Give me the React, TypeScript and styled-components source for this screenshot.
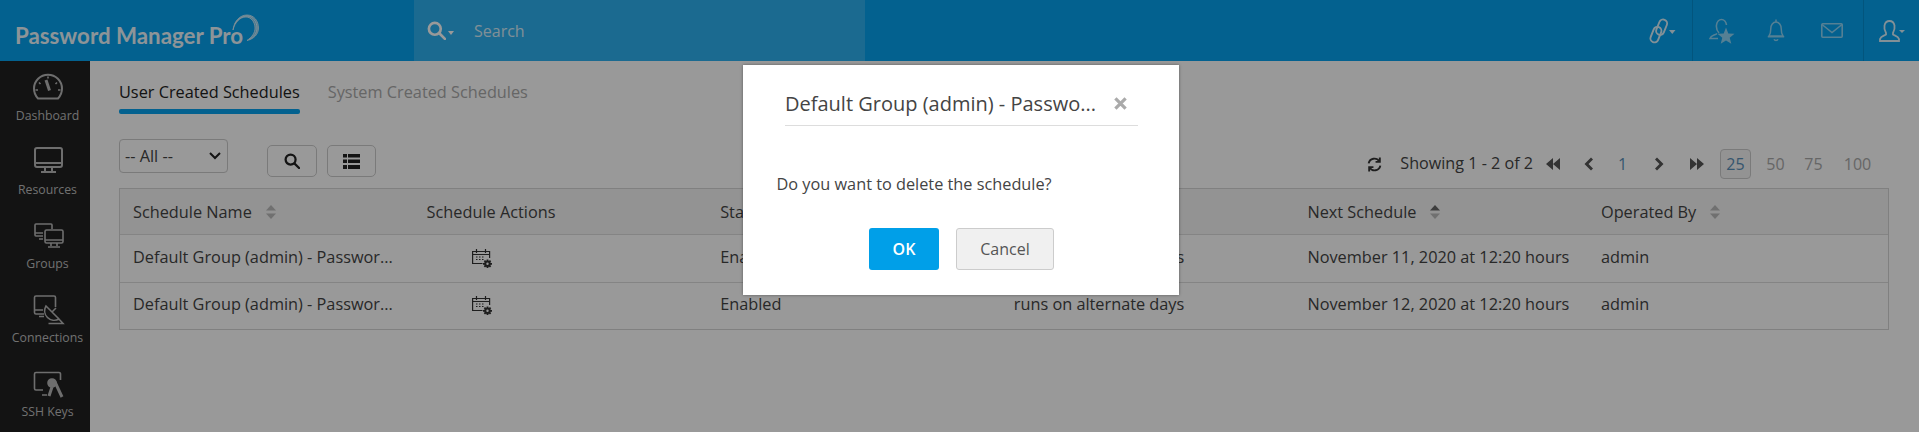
import React from "react";
import styled, { createGlobalStyle } from "styled-components";

const Global = createGlobalStyle`
  html, body { margin: 0; padding: 0; height: 100%; overflow: hidden; background: #fff; }
  body { font-family: "Open Sans", "Liberation Sans", sans-serif; font-size: 16.3px; color: #333; }
  * { box-sizing: border-box; }
`;

const Page = styled.div`position: relative; width: 1919px; height: 432px; overflow: hidden; display: flex; flex-direction: column;`;
const Header = styled.header`height: 61px; flex: none; background: #05a2ee; display: flex; align-items: stretch;`;
const LogoBox = styled.div`width: 414px; flex: none; display: flex; align-items: center; padding: 0 0 0 15px; position: relative;`;
const LogoText = styled.span`color: #fff; opacity: .92; font-family: "Lato", "Open Sans", sans-serif; font-size: 22.3px; font-weight: 700; white-space: nowrap; margin-top: 9px;`;
const LogoArc = styled.svg`position: absolute; left: 231px; top: 14px;`;
const SearchBox = styled.div`width: 451px; flex: none; background: rgba(255,255,255,.16); display: flex; align-items: center; padding-left: 13px; color: #fff;`;
const SearchCaret = styled.span`display: flex; margin: 4px 0 0 2px;`;
const SearchLabel = styled.span`margin-left: 20px; font-size: 16px; color: #fff; opacity: .8;`;
const Spacer = styled.div`flex: 1;`;
const HeadIcon = styled.div<{ $w: number; $line?: boolean; $o?: number }>`width: ${p => p.$w}px; flex: none; display: flex; align-items: center; justify-content: center; color: #fff; border-left: ${p => (p.$line ? "1px solid rgba(0,0,0,.12)" : "none")}; svg { opacity: ${p => p.$o ?? 0.75}; }`;

const Body = styled.div`flex: 1; display: flex; min-height: 0;`;
const Side = styled.nav`width: 90px; flex: none; background: #212121; padding: 12px 0 0 5px; display: flex; flex-direction: column;`;
const SideItem = styled.div`height: 74px; flex: none; display: flex; flex-direction: column; align-items: center; color: #b8b8b8;`;
const SideLabel = styled.span`font-size: 12.3px; line-height: 16px; margin-top: 5px; color: #bdbdbd; white-space: nowrap;`;

const Main = styled.main`flex: 1; background: #fff; padding: 0 30px 0 29px; min-width: 0;`;
const Tabs = styled.div`display: flex; height: 53px; gap: 28px;`;
const Tab = styled.div<{ $on?: boolean }>`height: 53px; padding-top: 20px; line-height: 22px; color: ${p => (p.$on ? "#222" : "#aaa")}; position: relative; white-space: nowrap;`;
const TabBar = styled.i`position: absolute; left: 0; right: 0; bottom: 0; height: 5px; background: #05a2ee; border-radius: 2px;`;

const Toolbar = styled.div`height: 74px; display: flex; align-items: flex-start;`;
const Select = styled.div`margin-top: 25px; width: 109px; height: 34px; border: 1px solid #ccc; border-radius: 4px; display: flex; align-items: center; justify-content: space-between; padding: 0 6px 0 5px; color: #444;`;
const ToolBtn = styled.div<{ $w: number; $ml: number }>`margin-top: 31px; margin-left: ${p => p.$ml}px; width: ${p => p.$w}px; height: 32px; border: 1px solid #ccc; border-radius: 5px; display: flex; align-items: center; justify-content: center; color: #222;`;
const Pager = styled.div`margin-left: auto; margin-top: 35px; height: 30px; padding-right: 11.5px; display: flex; align-items: center; color: #444; font-size: 16px;`;
const Showing = styled.span`margin: 0 13px 0 18px; white-space: nowrap; font-size: 16.15px; position: relative; top: -1px;`;
const Step = styled.span<{ $ml: number }>`display: flex; margin-left: ${p => p.$ml}px;`;
const PageNum = styled.span<{ $w: number; $on?: boolean; $ml: number; $c?: string }>`
  display: flex; align-items: center; justify-content: center; height: 30px;
  width: ${p => p.$w}px; margin-left: ${p => p.$ml}px;
  color: ${p => p.$c ?? "#aaa"};
  ${p => (p.$on ? "border: 1px solid #ccc; border-radius: 4px; background: #f5f5f5;" : "")}
`;

const Table = styled.div`border: 1px solid #d6d6d6; width: 1770px;`;
const Row = styled.div<{ $head?: boolean; $h: number; $pad?: number }>`
  display: grid; grid-template-columns: repeat(5, 293.6px) 1fr;
  height: ${p => p.$h}px; align-items: center;
  padding-bottom: ${p => p.$pad ?? 0}px;
  background: ${p => (p.$head ? "#f5f5f5" : "#fff")};
  border-bottom: 1px solid #dcdcdc;
  &:last-child { border-bottom: none; }
`;
const Cell = styled.div`padding-left: 13px; white-space: nowrap; display: flex; align-items: center; gap: 14px; color: #444;`;
const IconCell = styled(Cell)`padding-left: 58px; margin-bottom: -4px;`;

const Overlay = styled.div`position: absolute; inset: 0; background: rgba(0,0,0,.4);`;
const Modal = styled.div`position: absolute; left: 743px; top: 65px; width: 436px; height: 230px; background: #fff; box-shadow: 0 0 3px rgba(0,0,0,.4); display: flex; flex-direction: column; padding: 0 41px 0 33.5px;`;
const ModalHead = styled.div`margin-left: 8.5px; height: 61px; border-bottom: 1px solid #ddd; display: flex; align-items: center; justify-content: space-between; padding: 16px 11px 0 0; font-size: 20px; color: #444; white-space: nowrap;`;
const Close = styled.span`color: #aaa; display: flex;`;
const Message = styled.p`margin: 46px 0 0; line-height: 24px; color: #444; white-space: nowrap;`;
const Buttons = styled.div`display: flex; margin: 32px 0 0 92.5px; gap: 17px;`;
const Ok = styled.button`width: 70px; height: 42px; border: none; border-radius: 3px; background: #009fe8; color: #fff; font: 600 16px "Open Sans", sans-serif;`;
const Cancel = styled.button`width: 98px; height: 42px; border: 1px solid #ccc; border-radius: 3px; background: #f0f0f0; color: #555; font: 16px "Open Sans", sans-serif;`;

const Sort = ({ up }: { up?: boolean }) => (
  <svg width="10" height="14" viewBox="0 0 10 14"><path d="M5 0l5 5.500H0z" fill={up ? "#666" : "#bbb"} /><path d="M5 14l5-5.500H0z" fill="#bbb" /></svg>
);
const S = { width: 34, height: 30, viewBox: "0 2 34 30", fill: "none", stroke: "currentColor", strokeWidth: 1.6 } as const;

const Dash = () => (
  <svg {...S} strokeWidth={2}><path d="M7 27.500A14 14 0 1 1 27 27.500z" /><path d="M15 9l3.500 10.500" strokeWidth="3" /><path d="M17 5.500v2M8 11.500l1.500 1.500M26 11.500L24.500 13M4.500 19h2.500M27 19h2.500" strokeWidth="1.600" /></svg>
);
const Monitor = () => (
  <svg {...S} strokeWidth={2}><rect x="4" y="3" width="27" height="19" rx="2" /><path d="M4 18h27M14 22v4M21 22v4M10 27h15" /></svg>
);
const Groups = () => (
  <svg {...S}><path d="M21 10V6a1 1 0 0 0-1-1H5a1 1 0 0 0-1 1v10a1 1 0 0 0 1 1h7M4 14h8M8 20h4" /><rect x="14" y="11" width="18" height="13" rx="1.500" /><path d="M14 21h18M20 24v3M26 24v3M17 28h12" /></svg>
);
const Conn = () => (
  <svg {...S}><path d="M13 21H5a1.500 1.500 0 0 1-1.500-1.500V4.500A1.500 1.500 0 0 1 5 3h18a1.500 1.500 0 0 1 1.500 1.500V14M4 17h8M8 23.500h5" /><path d="M15 13l13 13a9.500 9.500 0 0 1-13-13zM21 19l4-4M17.500 30.500H32l-5-5.500" /></svg>
);
const Ssh = () => (
  <svg {...S}><path d="M12 23H5a1.500 1.500 0 0 1-1.500-1.500V7a1.500 1.500 0 0 1 1.500-1.500h23a1.500 1.500 0 0 1 1.500 1.500v6M11 28h5" /><circle cx="21" cy="16" r="4" fill="currentColor" /><path d="M24 15l7 15M21 20l-3 9" strokeWidth="3" /></svg>
);
const Cal = () => (
  <svg width="21" height="20" viewBox="0 0 21 20" fill="none" stroke="#333" strokeWidth="1.200">
    <path d="M10.500 14.500H.6V2.500h17v6.500M4.500 0v4M13.500 0v4M.6 5.500h17" />
    <path d="M4 8h1.500M7 8h1.500M10 8h1.500M4 10.500h1.500M7 10.500h1.500M10 10.500h1.500" />
    <path d="M15.500 10.500v8.500M11 14.800h9M12.400 11.700l6.200 6.200M18.600 11.700l-6.200 6.200" strokeWidth="1.800" />
    <circle cx="15.500" cy="14.800" r="2.200" fill="#fff" strokeWidth="2" />
  </svg>
);
const Glass = ({ s = 17 }: { s?: number }) => (
  <svg width={s} height={s} viewBox="0 0 17 17" fill="none" stroke="currentColor" strokeWidth="2.400"><circle cx="7" cy="7" r="5.300" /><path d="M11 11l5 5" strokeLinecap="round" /></svg>
);
const Caret = () => <svg width="6" height="4" viewBox="0 0 6 4"><path d="M0 0h6L3 4z" fill="currentColor" /></svg>;
const Arrow = ({ d }: { d: string }) => <svg width="14" height="14" viewBox="0 0 14 14" fill="#555"><path d={d} /></svg>;

const items: [string, React.ReactNode][] = [
  ["Dashboard", <Dash />], ["Resources", <Monitor />], ["Groups", <Groups />], ["Connections", <Conn />], ["SSH Keys", <Ssh />],
];
const rows = ["November 11, 2020 at 12:20 hours", "November 12, 2020 at 12:20 hours"];

export default function App() {
  return (
    <Page>
      <Global />
      <Header>
        <LogoBox>
          <LogoText>Password Manager Pro</LogoText>
          <LogoArc width="29" height="28" viewBox="0 0 29 28" fill="none" stroke="#fff" opacity=".85" strokeWidth=".8">
            <path d="M2 16C3 7 9 1 16 1c7 0 11.500 6 11.500 13 0 6-4.500 11-11.500 12.500 5-3.500 8-7.500 8-12.500 0-6-4-11-9-11C9 3 4 8 2 16z" fill="#fff" fillOpacity=".55" />
            <path d="M4 10c3-5 7-8 12-8 6 0 10 6 10 12 0 5-3 9-8 11.500" strokeWidth="1" />
          </LogoArc>
        </LogoBox>
        <SearchBox>
          <Glass s={19} /><SearchCaret><Caret /></SearchCaret>
          <SearchLabel>Search</SearchLabel>
        </SearchBox>
        <Spacer />
        <HeadIcon $w={60} $o={0.85}>
          <svg width="28" height="28" viewBox="0 0 28 28" fill="none" stroke="currentColor" strokeWidth="1.900">
            <g transform="translate(11 14) rotate(22)"><rect x="-3" y="-12.500" width="8" height="16" rx="4" /><rect x="-5.500" y="-3.500" width="8" height="16" rx="4" /></g>
            <path d="M21 13h6.500L24.250 17z" fill="currentColor" stroke="none" />
          </svg>
        </HeadIcon>
        <HeadIcon $w={58} $line $o={0.55}>
          <svg width="26" height="26" viewBox="0 0 26 26" fill="none" stroke="currentColor" strokeWidth="1.600"><path d="M10 15c-2-2-3-4-2.500-8 .4-3 2.500-5.500 5-5.500s4.600 2.500 5 5.500M8 15.500c-2 2-6 1.500-7 5h8" /><path d="M17 9.500l2.300 6 6.200.3-4.800 4 1.600 6-5.300-3.300-5.300 3.300 1.600-6-4.800-4 6.200-.3z" fill="currentColor" stroke="none" /></svg>
        </HeadIcon>
        <HeadIcon $w={51} $o={0.55}>
          <svg width="18" height="23" viewBox="0 0 18 23" fill="none" stroke="currentColor" strokeWidth="1.500"><path d="M2 17c1.500-2 1.800-4 1.800-7.500S6 3 9 3s5.200 3 5.200 6.500S14.500 15 16 17zM.8 17.800h16.400M9 .5V3M7 20.300c.7 1.500 3.300 1.500 4 0" /></svg>
        </HeadIcon>
        <HeadIcon $w={62} $o={0.55}>
          <svg width="22" height="15" viewBox="0 0 22 15" fill="none" stroke="currentColor" strokeWidth="1.600"><rect x=".8" y=".8" width="20.400" height="13.400" rx="1" /><path d="M1 1.500l10 8 10-8" /></svg>
        </HeadIcon>
        <HeadIcon $w={56} $line $o={0.85}>
          <svg width="26" height="22" viewBox="0 0 26 22" fill="none" stroke="currentColor" strokeWidth="1.800"><path d="M7 13c-1.500-2.500-2-5-1.500-7.500C6 3 8 1 10.500 1S15 3 15.500 5.500c.4 2.500 0 5-1.500 7.500v1.500c2 1.500 5 1.500 6 4.500v2H1v-2c1-3 4-3 6-4.500z" /><path d="M20 10h6l-3 3z" fill="currentColor" stroke="none" /></svg>
        </HeadIcon>
      </Header>
      <Body>
        <Side>
          {items.map(([label, icon]) => (
            <SideItem key={label}>{icon}<SideLabel>{label}</SideLabel></SideItem>
          ))}
        </Side>
        <Main>
          <Tabs>
            <Tab $on>User Created Schedules<TabBar /></Tab>
            <Tab>System Created Schedules</Tab>
          </Tabs>
          <Toolbar>
            <Select>-- All --
              <svg width="12" height="8" viewBox="0 0 12 8" fill="none" stroke="#222" strokeWidth="2"><path d="M1 1l5 5 5-5" /></svg>
            </Select>
            <ToolBtn $w={50} $ml={39}><Glass s={16} /></ToolBtn>
            <ToolBtn $w={49} $ml={10}>
              <svg width="17" height="15" viewBox="0 0 17 15" fill="#222"><path d="M0 0h4v3.500H0zM5 0h12v3.500H5zM0 5.500h4V9H0zM5 5.500h12V9H5zM0 11h4v4H0zM5 11h12v4H5z" /></svg>
            </ToolBtn>
            <Pager>
              <svg width="15" height="17" viewBox="0 0 14 16" fill="none" stroke="#333" strokeWidth="1.800"><path d="M1.500 7a5.500 5.500 0 0 1 10-2M12.500 9a5.500 5.500 0 0 1-10 2" /><path d="M12 1.500v4H8M2 14.500v-4h4" /></svg>
              <Showing>Showing 1 - 2 of 2</Showing>
              <Arrow d="M7 1v12L0 7zM14 1v12L7 7z" />
              <Step $ml={21.5}><Arrow d="M9 .5l2 2L6.500 7l4.500 4.500-2 2L2.500 7z" /></Step>
              <PageNum $w={14} $ml={20} $c="#5a8fb8">1</PageNum>
              <Step $ml={22}><Arrow d="M5 .5l-2 2L7.500 7 3 11.500l2 2L11.500 7z" /></Step>
              <Step $ml={24.5}><Arrow d="M0 1v12l7-6zM7 1v12l7-6z" /></Step>
              <PageNum $w={31} $ml={16} $on $c="#5a8fb8">25</PageNum>
              <PageNum $w={30} $ml={9.5}>50</PageNum>
              <PageNum $w={30} $ml={8}>75</PageNum>
              <PageNum $w={40} $ml={9}>100</PageNum>
            </Pager>
          </Toolbar>
          <Table>
            <Row $head $h={46}>
              <Cell>Schedule Name<Sort /></Cell>
              <Cell>Schedule Actions</Cell>
              <Cell>Status<Sort /></Cell>
              <Cell>Description<Sort /></Cell>
              <Cell>Next Schedule<Sort up /></Cell>
              <Cell>Operated By<Sort /></Cell>
            </Row>
            {rows.map((next, i) => (
              <Row key={next} $h={i ? 46 : 48} $pad={i ? 5 : 4}>
                <Cell>Default Group (admin) - Passwor...</Cell>
                <IconCell><Cal /></IconCell>
                <Cell>Enabled</Cell>
                <Cell>runs on alternate days</Cell>
                <Cell>{next}</Cell>
                <Cell>admin</Cell>
              </Row>
            ))}
          </Table>
        </Main>
      </Body>
      <Overlay />
      <Modal>
        <ModalHead>
          <span>Default Group (admin) - Passwo...</span>
          <Close><svg width="13" height="13" viewBox="0 0 14 14" stroke="currentColor" strokeWidth="3.500"><path d="M1.500 1.500l11 11M12.500 1.500l-11 11" /></svg></Close>
        </ModalHead>
        <Message>Do you want to delete the schedule?</Message>
        <Buttons><Ok>OK</Ok><Cancel>Cancel</Cancel></Buttons>
      </Modal>
    </Page>
  );
}
